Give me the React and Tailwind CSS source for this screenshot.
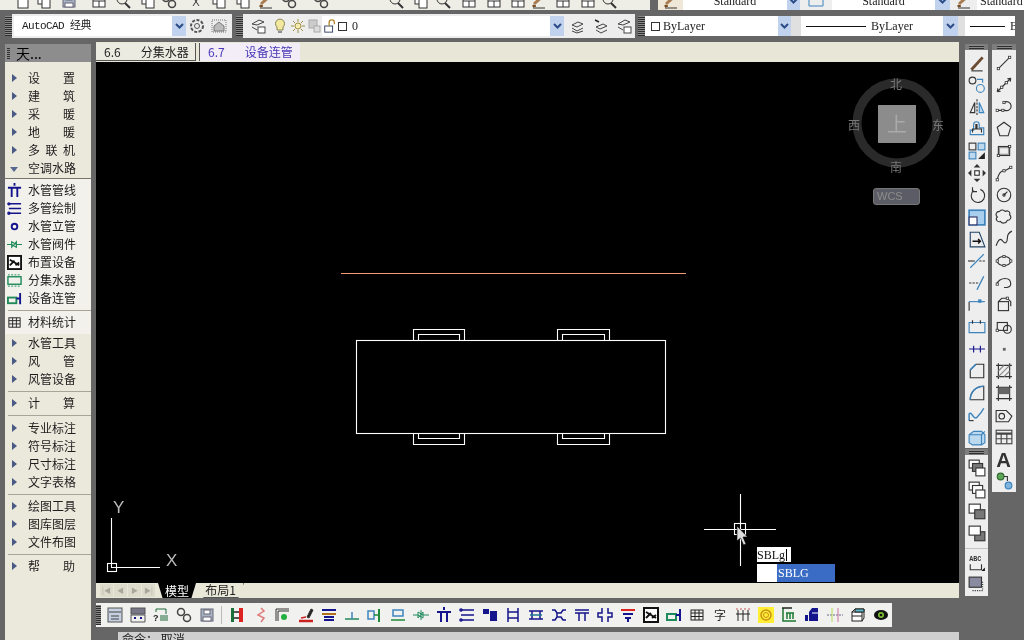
const S = ({ children, w = 16, h = 16 }) => (
  <svg width={w} height={h} viewBox="0 0 16 16" fill="none" stroke="#333" strokeWidth="1" className="shrink-0">
    {children}
  </svg>
);

// square nodes used by the draw toolbar
const N = ({ x, y }) => <rect x={x - 1} y={y - 1} width="2" height="2" fill="#fff" stroke="#333" strokeWidth=".7" />;

const navy = '#14148c';
const green = '#1f8a5a';
const blue = '#3d84bd';

const icons = {
  pipe: <g stroke={navy} strokeWidth="2"><path d="M1 5h14M8 0v3M5 5v10M11 5v10" /></g>,
  multi: <g stroke={navy} strokeWidth="1.6"><path d="M2 3h13M2 8h13M2 13h13" /><circle cx="2" cy="3" r="1" /><circle cx="2" cy="13" r="1" /></g>,
  riser: <circle cx="8" cy="8" r="3" stroke={navy} strokeWidth="2" />,
  valve: <g stroke={green} strokeWidth="1.2"><path d="M0 8h5l5 3V5l-5 6V5l5 3h6" /></g>,
  equip: <g><rect x="1" y="1" width="14" height="14" fill="#fff" stroke="#111" strokeWidth="2" /><path d="M3 5l10 6M3 11l5-5M9 11l4-3" stroke="#111" strokeWidth="2" /></g>,
  manifold: <g stroke={green}><rect x="1" y="4" width="14" height="8" strokeWidth="1.5" /><path d="M1 2h14M1 14h14" strokeDasharray="2 1.5" /></g>,
  connect: <g><rect x="1" y="7" width="9" height="6" stroke={green} strokeWidth="2" /><path d="M10 8h3M14 2v12" stroke={navy} strokeWidth="2" /></g>,
  table: <g stroke="#222"><rect x="2" y="3" width="12" height="10" /><path d="M2 6h12M2 9.500h12M6 3v10M10 3v10" /></g>,

  brush: <g><path d="M3 11L13 2" stroke="#a87b50" strokeWidth="3" /><path d="M2 12l3 1-3 1z" fill="#7a4a20" stroke="#7a4a20" /><path d="M2 15h12" /></g>,
  line: <g><path d="M3 13L13 3" /><N x={3} y={13} /><N x={13} y={3} /></g>,
  xline: <g><path d="M2 14L14 2M2 14l3-.5M2 14l.5-3M14 2l-3 .5M14 2l-.5 3" /><N x={6} y={10} /><N x={10} y={6} /></g>,
  pline: <g><path d="M2 11h7a4 4 0 1 0-1-7" /><N x={2} y={11} /><N x={7} y={11} /><N x={8} y={4} /></g>,
  polygon: <path d="M8 2l6 4.500-2.300 7.500H4.300L2 6.500z" />,
  rect: <g><rect x="3" y="4" width="10" height="8" /><path d="M4 5h8v6H4z" stroke="#999" /><N x={3} y={12} /><N x={13} y={4} /></g>,
  arc: <g><path d="M2 14c1-5 3-8 6-8 2 0 4-2 6-3" /><N x={2} y={14} /><N x={8} y={6} /><N x={14} y={3} /></g>,
  circle: <g><circle cx="8" cy="8" r="6" /><path d="M8 8l3-3" /><circle cx="8" cy="8" r="1" /></g>,
  cloud: <path d="M4 3c2-2 4-1 5 0 2-1 5 0 4 3 2 2 1 5-2 5-1 3-5 3-6 1-3 1-5-2-3-4-2-2-1-5 2-5z" />,
  spline: <path d="M1 14c2-6 4-7 6-4s4 1 4-3 2-5 4-6" />,
  ellipse: <g><ellipse cx="8" cy="8" rx="6" ry="4" /><N x={2} y={8} /><N x={14} y={8} /><N x={8} y={4} /><N x={8} y={12} /></g>,
  earc: <g><path d="M2 9c0-3 4-5 7-5s5 2 5 5-4 3-6 3" /><N x={2} y={9} /></g>,
  insert: <g><rect x="3" y="5" width="9" height="8" /><path d="M3 5l3-3h5l3 3v4" /><N x={11} y={2} /></g>,
  block: <g><rect x="2" y="4" width="9" height="7" /><circle cx="11" cy="10" r="3.500" /><N x={2} y={11} /></g>,
  point: <rect x="7" y="7" width="2.500" height="2.500" fill="#666" stroke="none" />,
  hatch: <g><path d="M1 3h14M1 13h14M3 1v14M13 1v14" /><path d="M3 8l5-5M3 13L13 3M8 13l5-5" stroke="#888" /></g>,
  grad: <g><path d="M1 3h14M1 13h14M3 1v14M13 1v14" /><rect x="3" y="3" width="10" height="6" fill="#666" stroke="none" /></g>,
  region: <g><path d="M1 4h9l5 5-3 5H1z" /><circle cx="6" cy="9" r="2.500" /></g>,
  grid: <g stroke="#444"><rect x="1" y="2" width="14" height="12" /><path d="M1 5h14" strokeWidth="2" /><path d="M1 9.500h14M5.500 5v9M10.500 5v9" /></g>,
  bigA: <text x="1" y="15" fontSize="18" fontWeight="700" fontFamily="Liberation Sans, sans-serif" fill="#333" stroke="none">A</text>,
  addsel: <g><circle cx="5" cy="4" r="3" fill="#5da558" stroke="#2f6a2f" /><circle cx="12" cy="12" r="3" fill="#7fb4dd" stroke={blue} /><path d="M8 4h3v4" /></g>,

  erase: <g><path d="M3 14L13 3" stroke="#6b4a30" strokeWidth="2.500" /><path d="M3 15h10" /></g>,
  copy: <g><circle cx="4" cy="4" r="3" /><circle cx="11" cy="11" r="3.500" stroke={blue} /><path d="M8 3h5v3" stroke={blue} /></g>,
  mirror: <g><path d="M8 1v14" strokeDasharray="2 1" /><path d="M6 4L2 13h4z" /><path d="M10 4l4 9h-4z" fill="#bcd9ef" stroke={blue} /></g>,
  offset: <g stroke={blue}><path d="M2 13V9h3V4a2 2 0 0 1 5 0v3h4v6z" /><path d="M4 11V8h3V4h1v4h4v3" stroke="#333" /></g>,
  array: <g><rect x="1" y="1" width="6" height="6" /><rect x="9" y="1" width="6" height="6" fill="#bcd9ef" stroke={blue} /><rect x="1" y="9" width="6" height="6" fill="#bcd9ef" stroke={blue} /><path d="M9 15l6-6v6z" fill="#222" stroke="none" /></g>,
  move: <g fill="#333" stroke="none"><path d="M8 0l3 3H5zM8 16l-3-3h6zM0 8l3-3v6zM16 8l-3 3V5z" /><rect x="6" y="6" width="4" height="4" fill="#fff" stroke="#333" /></g>,
  rotate: <path d="M5 4a6 6 0 1 0 6-1M4 1v4h4" />,
  scale: <g><rect x="1" y="2" width="14" height="13" fill="#a8d0ee" stroke={blue} strokeWidth="1.500" /><rect x="1" y="8" width="7" height="7" fill="#fff" stroke="#336" /></g>,
  stretch: <g><path d="M2 2h8l5 13H2z" stroke="#246" /><path d="M4 10h7M9 8l2 2-2 2" stroke="#111" strokeWidth="1.300" /></g>,
  trim: <g><path d="M2 14L14 2" stroke={blue} /><path d="M0 8h6" /><path d="M10 8h6" strokeDasharray="2 1" /></g>,
  extend: <g><path d="M8 14L14 2" stroke={blue} strokeWidth="1.300" /><path d="M1 8h9" strokeDasharray="2 1" /></g>,
  brk: <g><path d="M1 5V13" /><path d="M1 5h14" stroke={blue} /><rect x="9" y="3" width="3" height="3" fill={blue} stroke="none" /></g>,
  brk2: <g stroke={blue}><path d="M1 4h14v9H1z" /><path d="M4 2v3M11 2v3" stroke="#333" /></g>,
  join: <g stroke={navy}><path d="M1 8h14M5 5v6M11 5v6" /></g>,
  chamfer: <g><path d="M2 14V7l5-5h7v12z" /><path d="M2 7l5-5" stroke={blue} strokeWidth="1.300" /></g>,
  fillet: <g><path d="M2 14c0-7 5-12 12-12v12z" /><path d="M2 14c0-7 5-12 12-12" stroke={blue} strokeWidth="1.300" /></g>,
  blend: <g><path d="M1 13V7c2-3 4 6 7 3s4-4 6-8" stroke={blue} strokeWidth="1.300" /><path d="M1 13h4" /></g>,
  solid: <g stroke={blue}><path d="M1 6l4-3h7l3 3v7l-3 2H4l-3-2z" fill="#bcd9ef" /><path d="M1 6h11v9M12 6l3-3" /></g>,
  order1: <g><rect x="1" y="1" width="9" height="7" fill="#fff" /><rect x="4" y="4" width="9" height="7" fill="#777" /><rect x="7" y="8" width="8" height="7" fill="#fff" /></g>,
  order2: <g><rect x="1" y="1" width="9" height="7" fill="#fff" /><rect x="4" y="4" width="9" height="7" fill="#fff" /><rect x="7" y="8" width="8" height="7" fill="#fff" /></g>,
  order3: <g><rect x="1" y="1" width="10" height="8" fill="#fff" /><rect x="6" y="6" width="9" height="8" fill="#777" /></g>,
  order4: <g><rect x="6" y="6" width="9" height="8" fill="#777" /><rect x="1" y="1" width="10" height="8" fill="#fff" /></g>,
  abc: <g><text x="1" y="6" fontSize="6" fontWeight="700" fontFamily="Liberation Mono, monospace" fill="#333" stroke="none">ABC</text><path d="M2 9v5h10v-5" /><path d="M12 15l3-3v3z" fill="#111" stroke="none" /></g>,
  grey: <g><rect x="1" y="1" width="11" height="9" fill="#8a8aa0" /><path d="M4 13h9M13 5v8" strokeDasharray="1 1" /></g>,

  newf: <rect x="3" y="2" width="10" height="13" fill="#fff" />,
  save: <g stroke="#667"><rect x="2" y="2" width="12" height="12" fill="#a9b4c4" /><rect x="5" y="3" width="6" height="4" fill="#fff" /><rect x="4" y="10" width="8" height="4" fill="#fff" /></g>,
  cut: <path d="M3 1l8 12M13 1L5 13" />,
  two: <g><rect x="2" y="1" width="8" height="10" fill="#fff" /><rect x="6" y="5" width="8" height="10" fill="#fff" /></g>,
  zoom: <g><circle cx="7" cy="6" r="5" /><path d="M10 10l5 5" strokeWidth="2" /></g>,
  panel: <g><rect x="2" y="1" width="12" height="13" fill="#fff" /><path d="M2 8h12M8 8v6" /></g>,

  bulb: <g><path d="M5 9a4.500 4.500 0 1 1 6 0v3H5z" fill="#f2e8a0" stroke="#8a8550" /><path d="M6 14h4" /></g>,
  sun: <g stroke="#a09040"><circle cx="8" cy="8" r="3" fill="#f5ebb0" /><path d="M8 1v3M8 12v3M1 8h3M12 8h3M3 3l2 2M11 11l2 2M13 3l-2 2M5 11l-2 2" /></g>,
  greybox: <g stroke="#aaa"><rect x="3" y="2" width="8" height="8" fill="#ccc" /><rect x="8" y="8" width="6" height="6" fill="#ddd" /></g>,
  lock: <g><rect x="2" y="8" width="9" height="7" fill="#fff" stroke="#235" /><path d="M7 8V4a3 3 0 0 1 6 0v2" stroke="#b08a30" strokeWidth="1.500" /></g>,
  gear: <g stroke="#555"><circle cx="8" cy="8" r="6" strokeDasharray="3 1.500" strokeWidth="2" /><circle cx="8" cy="8" r="2.500" /></g>,
  home: <g stroke="#777"><rect x="1" y="2" width="14" height="12" strokeDasharray="1 1" /><path d="M3 8l5-4 5 4v5H3z" fill="#bbb" /></g>,
  layers: <g stroke="#444"><path d="M3 7l6-3 5 2-6 3zM3 10l5 3 6-3M3 13l5 2 6-2" /></g>,
  layers2: <g stroke="#444"><path d="M3 9l7-3 4 2-7 3zM3 12l5 3 6-3" /><path d="M2 2l4 2" stroke="#222" strokeWidth="1.500" /></g>,
  layers3: <g stroke="#444"><path d="M2 6l7-4 5 2-7 3zM2 9l5 3" /><rect x="8" y="9" width="7" height="6" fill="#fff" /></g>,

  qhelp: <g><text x="0" y="14" fontSize="9" fontWeight="700" fontFamily="Liberation Sans, sans-serif" fill="#222" stroke="none">?</text><path d="M3 5V2h10v5M7 9h8M7 11h8M7 13h8" stroke="#1c6a3a" /></g>,
  chain: <g stroke="#444" strokeWidth="1.500"><circle cx="5" cy="5" r="3.500" /><circle cx="11" cy="11" r="3.500" /></g>,
  dwg: <g><rect x="1" y="1" width="14" height="14" fill="#c5d0e0" stroke="#555" /><path d="M2 5h12M4 9h8M4 12h8" stroke="#444" /></g>,
  calc: <g><rect x="1" y="1" width="14" height="6" fill="#778" stroke="#555" /><path d="M1 8h14v7H1z" stroke="#555" /><path d="M4 11h2M10 11h2" stroke={navy} strokeWidth="2" /></g>,
  redbar: <g><rect x="2" y="1" width="3" height="14" fill="#1b6f3a" stroke="none" /><rect x="10" y="1" width="4" height="14" fill="#d22" stroke="none" /><path d="M5 5h5M5 11h5" stroke="#222" strokeWidth="1.500" /></g>,
  redcurve: <path d="M9 1l3 3-6 4 6 3-3 4" stroke="#e07878" strokeWidth="1.500" />,
  corner: <g><path d="M1 14V2h13M3 14V4h11" stroke="#333" /><circle cx="9" cy="10" r="3" fill="#22b040" stroke="none" /></g>,
  pen: <g><path d="M9 10l4-8 2 1-4 8z" fill="#222" /><path d="M1 14h14" stroke="#c22" strokeWidth="2.500" /><path d="M3 11l5-1" stroke="#c22" strokeWidth="1.500" /></g>,
  stack: <g stroke={navy}><path d="M1 3h14" strokeWidth="2" /><path d="M1 7h14" stroke="#b07020" strokeWidth="2" /><path d="M3 10h10M3 13h10" strokeWidth="2" /></g>,
  tee: <g stroke={green} strokeWidth="1.500"><path d="M1 12h14" /><path d="M8 5v7" stroke={blue} /></g>,
  sideT: <g strokeWidth="1.500"><rect x="1" y="4" width="6" height="8" stroke={blue} /><path d="M7 8h5" stroke="#1f8a3a" /><path d="M12 2v13" stroke="#1f8a3a" strokeWidth="2" /></g>,
  box2: <g strokeWidth="1.500"><rect x="3" y="3" width="10" height="6" stroke={blue} /><path d="M1 13h14" stroke="#1f8a3a" /></g>,
  gval: <g stroke="#1f8a5a"><path d="M0 8h5l5 3V5l-5 6V5l5 3h6M8 3v10" /></g>,
  pair: <g fill={navy} stroke="none"><rect x="1" y="2" width="6" height="5" /><rect x="8" y="4" width="7" height="10" /></g>,
  ibeam: <g stroke={navy} strokeWidth="1.500"><path d="M3 1v14M13 1v14M3 5h10M3 11h10" /></g>,
  bar: <g stroke={navy} strokeWidth="1.500"><path d="M1 4h14M1 12h14M4 4v8M12 4v8" /><path d="M2 8h12" stroke="#1a7a90" /></g>,
  flare: <g stroke={navy} strokeWidth="1.500"><path d="M1 3h3l2 3h4l2-3h3M1 13h3l2-3h4l2 3h3M6 6v4" /></g>,
  fork: <g stroke={navy} strokeWidth="1.500"><path d="M1 3h14M1 6h14M5 6v8M11 6v8" /></g>,
  cross: <g stroke={navy} strokeWidth="1.500"><path d="M5 1v5H1v4h4v5M11 1v5h4v4h-4v5" /></g>,
  funnel: <g strokeWidth="2"><path d="M1 3h14" stroke="#d22" /><path d="M3 7h10" stroke={navy} /><path d="M5 11h6M8 11v4" stroke={navy} /></g>,
  zi: <text x="2" y="13" fontSize="12" fontFamily="Noto Sans CJK SC, sans-serif" fill="#222" stroke="none">字</text>,
  comb: <g><path d="M1 7h14M3 3v11M8 3v11M13 3v11" stroke="#222" /><path d="M1 2h14" stroke="#c55" strokeDasharray="2 2" /></g>,
  yellow: <g><rect x="0" y="0" width="16" height="16" fill="#ffee33" stroke="none" /><circle cx="8" cy="8" r="5" stroke="#c8901a" strokeWidth="1.500" /><circle cx="8" cy="8" r="2.500" stroke="#c8901a" /></g>,
  gbar: <g stroke="#1a7a30" strokeWidth="1.500"><path d="M2 1v13h13" /><path d="M5 6h8M6 6v6M9 6v6M12 6v6" /><path d="M1 1h10" stroke="#222" /></g>,
  house: <g fill={navy} stroke="none"><path d="M5 5l3-4h6v13H5z" /><rect x="1" y="8" width="3" height="6" /><path d="M8 6h6" stroke="#fff" /></g>,
  magbar: <g><path d="M0 8h16" stroke="#668" strokeDasharray="2 1" /><path d="M5 1v14" stroke="#b4dc50" /><path d="M11 1v14" stroke="#d070a0" /></g>,
  cube: <g stroke="#222"><rect x="2" y="5" width="10" height="9" fill="#fff" /><path d="M2 5l3-3h9v9l-2 3M2 9h10" /><path d="M5 2h9v3H5z" fill="#58b8c8" /></g>,
  eye: <g><ellipse cx="8" cy="8" rx="7" ry="5" fill="#111" stroke="none" /><circle cx="8" cy="8" r="3" fill="#7fbf30" stroke="none" /><circle cx="8" cy="8" r="1.300" fill="#111" stroke="none" /></g>,
};

const Icon = ({ n, w, h }) => <S w={w} h={h}>{icons[n]}</S>;

const Gripper = ({ className = '' }) => (
  <div className={`bg-[repeating-linear-gradient(0deg,#2e2e2e_0_1px,#8a8a8a_1px_2px)] ${className}`} />
);

const Chevron = ({ className = '' }) => (
  <div className={`flex items-center justify-center bg-[#c1d2ee] ${className}`}>
    <svg width="9" height="6" viewBox="0 0 9 6" fill="none" stroke="#2b4c86" strokeWidth="2">
      <path d="M1 1l3.500 3.500L8 1" />
    </svg>
  </div>
);

// side menu ------------------------------------------------------------
const Label = ({ text }) => (
  <div className="ml-[5px] flex w-[47px] justify-between text-[12px] leading-none text-[#1e1e1e]">
    {text.split('').map((c, i) => <span key={i}>{c}</span>)}
  </div>
);

const MenuRow = ({ text, open }) => (
  <div className="flex h-[18px] items-center">
    <div className="flex w-[18px] justify-center">
      {open ? (
        <div className="mt-[2px] h-0 w-0 border-x-[4px] border-t-[5px] border-x-transparent border-t-[#56688e]" />
      ) : (
        <div className="h-0 w-0 border-y-[4px] border-l-[5px] border-y-transparent border-l-[#4a5a84]" />
      )}
    </div>
    <Label text={text} />
  </div>
);

const ToolRow = ({ text, icon }) => (
  <div className="flex h-[18px] items-center">
    <div className="flex w-[18px] justify-center pl-[1px]"><Icon n={icon} w={15} h={15} /></div>
    <Label text={text} />
  </div>
);

const Sep = ({ h = 'h-[6px]' }) => (
  <div className={`${h} flex items-center pl-[3px]`}>
    <div className="h-[1px] w-full bg-[#a7a597]" />
  </div>
);

const SidePanel = () => (
  <div className="ml-[5px] mr-[5px] mt-[2px] flex w-[86px] shrink-0 flex-col">
    <div className="flex h-[18px] shrink-0 items-center bg-[#8d8d8d]">
      <Gripper className="ml-[2px] h-[12px] w-[3px]" />
      <span className="ml-[6px] text-[14px] leading-none text-black">天...</span>
    </div>
    <div className="flex-1 bg-[#ebe8dc] pt-[7px]">
      {['设置', '建筑', '采暖', '地暖', '多联机'].map((t) => <MenuRow key={t} text={t} />)}
      <MenuRow text="空调水路" open />
      <div className="mt-[1px] bg-[#f2f1ec]">
        <div className="h-[1px] bg-[#77756b]" />
        <div className="pt-[2px]">
          <ToolRow text="水管管线" icon="pipe" />
          <ToolRow text="多管绘制" icon="multi" />
          <ToolRow text="水管立管" icon="riser" />
          <ToolRow text="水管阀件" icon="valve" />
          <ToolRow text="布置设备" icon="equip" />
          <ToolRow text="分集水器" icon="manifold" />
          <ToolRow text="设备连管" icon="connect" />
        </div>
        <Sep />
        <ToolRow text="材料统计" icon="table" />
        <div className="h-[3px]" />
      </div>
      {['水管工具', '风管', '风管设备'].map((t) => <MenuRow key={t} text={t} />)}
      <Sep />
      <MenuRow text="计算" />
      <Sep h="h-[7px]" />
      {['专业标注', '符号标注', '尺寸标注', '文字表格'].map((t) => <MenuRow key={t} text={t} />)}
      <Sep />
      {['绘图工具', '图库图层', '文件布图'].map((t) => <MenuRow key={t} text={t} />)}
      <Sep />
      <MenuRow text="帮助" />
    </div>
  </div>
);

// top toolbars -----------------------------------------------------------
const TopRow1 = () => (
  <div className="h-[10px] shrink-0 overflow-hidden">
    <div className="-mt-[8px] flex h-[18px] items-center">
      <div className="flex h-full w-[650px] items-center bg-[#eeede6] pl-[15px]">
        {[
          ['newf', 21], ['two', 25], ['save', 30], ['panel', 24], ['zoom', 25], ['two', 21], ['chain', 27], ['cut', 23],
          ['two', 24], ['two', 23], ['brush', 23], ['chain', 32], ['chain', 75], ['zoom', 25], ['two', 22], ['zoom', 26],
          ['panel', 25], ['panel', 24], ['panel', 21], ['brush', 24], ['panel', 25], ['panel', 21], ['zoom', 10],
        ].map(([n, w], i) => (
          <div key={i} className="shrink-0" style={{ width: w }}><Icon n={n} /></div>
        ))}
      </div>
      <div className="w-[8px]" />
      <div className="flex h-full w-[25px] items-center justify-center bg-[#efe8d8]"><Icon n="brush" /></div>
      <div className="flex h-full w-[104px] items-center justify-center bg-white font-['Liberation_Serif',serif] text-[12px] text-[#222]">Standard</div>
      <Chevron className="h-full w-[13px]" />
      <div className="flex h-full w-[32px] items-center justify-center bg-[#eeeeee]"><Icon n="brk2" /></div>
      <div className="flex h-full w-[103px] items-center justify-center bg-white font-['Liberation_Serif',serif] text-[12px] text-[#222]">Standard</div>
      <Chevron className="h-full w-[15px]" />
      <div className="flex h-full w-[27px] items-center justify-center bg-[#eeeeee]"><Icon n="brush" /></div>
      <div className="h-full flex-1 bg-white pl-[3px] font-['Liberation_Serif',serif] text-[12px] text-[#222]">Standard</div>
    </div>
  </div>
);

const Btn = ({ n, w = 'w-[22px]' }) => (
  <div className={`flex shrink-0 justify-center ${w}`}><Icon n={n} w={16} h={16} /></div>
);

const TopRow2 = () => (
  <div className="mt-[4px] flex h-[24px] shrink-0 items-center">
    <Gripper className="ml-[5px] h-[20px] w-[7px]" />
    <div className="flex h-full w-[220px] items-center bg-[#ededed] pl-[2px]">
      <div className="flex h-[20px] w-[158px] items-center bg-white pl-[8px] font-['Liberation_Mono','Noto_Sans_CJK_SC',monospace] text-[11px] tracking-[-0.6px] text-[#222]">AutoCAD 经典</div>
      <Chevron className="h-[20px] w-[14px]" />
      <Btn n="gear" />
      <Btn n="home" />
    </div>
    <Gripper className="ml-[4px] h-[20px] w-[7px]" />
    <div className="flex h-full w-[392px] items-center bg-[#ededed] pl-[3px]">
      <Btn n="layers3" w="w-[24px]" />
      <Btn n="bulb" w="w-[20px]" />
      <Btn n="sun" w="w-[15px]" />
      <Btn n="greybox" w="w-[17px]" />
      <div className="flex h-[20px] w-[231px] items-center bg-white pl-[1px] text-[12px] text-[#222]">
        <Icon n="lock" w={14} h={14} />
        <span className="ml-[1px] h-[9px] w-[9px] border border-[#333]" />
        <span className="ml-[5px] font-['Liberation_Serif',serif]">0</span>
      </div>
      <Chevron className="h-[20px] w-[14px]" />
      <Btn n="layers" w="w-[25px]" />
      <Btn n="layers2" w="w-[23px]" />
      <Btn n="layers3" w="w-[23px]" />
    </div>
    <Gripper className="ml-[3px] h-[20px] w-[7px]" />
    <div className="flex h-[20px] w-[133px] items-center bg-white pl-[6px] font-['Liberation_Serif',serif] text-[12px] text-[#222]">
      <span className="mr-[3px] h-[9px] w-[9px] border border-[#333]" />ByLayer
    </div>
    <Chevron className="h-[20px] w-[13px]" />
    <div className="h-[20px] w-[10px] bg-[#e0e0e0]" />
    <div className="flex h-[20px] w-[142px] items-center bg-white pl-[5px] font-['Liberation_Serif',serif] text-[12px] text-[#222]">
      <span className="mr-[5px] h-[1px] w-[60px] bg-[#111]" />ByLayer
    </div>
    <Chevron className="h-[20px] w-[15px]" />
    <div className="h-[20px] w-[7px] bg-[#e0e0e0]" />
    <div className="flex h-[20px] w-[50px] items-center overflow-hidden bg-white pl-[5px] font-['Liberation_Serif',serif] text-[12px] text-[#222]">
      <span className="mr-[5px] h-[1px] w-[35px] shrink-0 bg-[#111]" />B
    </div>
  </div>
);

// canvas ---------------------------------------------------------------
const Drawing = () => (
  <svg viewBox="96 62 863 521" className="absolute inset-0 h-full w-full" fill="none" stroke="#fff" strokeWidth="1.100">
    <path d="M341 273.500h345" stroke="#f59a70" />
    <rect x="356.500" y="340.500" width="309" height="93" />
    <path d="M413.500 340v-10.500h51V340M418.500 340v-5.500h41V340M557.500 340v-10.500h52V340M562.500 340v-5.500h42V340" />
    <path d="M413.500 434v10.500h51V434M418.500 434v4.500h41V434M557.500 434v10.500h52V434M562.500 434v4.500h42V434" />
    <path d="M111.500 518v49.500H160" />
    <rect x="107.500" y="563.500" width="9" height="8" />
    <text x="113" y="513" fontSize="17" fill="#bbb" stroke="none" fontFamily="Liberation Sans, sans-serif">Y</text>
    <text x="166" y="566" fontSize="17" fill="#bbb" stroke="none" fontFamily="Liberation Sans, sans-serif">X</text>
    <circle cx="897" cy="123" r="40" stroke="#2a2a2a" strokeWidth="9" />
    <path d="M704 529.500h72M740.500 494v72" />
    <rect x="734.500" y="523.500" width="11" height="11" />
    <path d="M737 526v15l3.500-3 3 7 2.500-1-3-7h4.500z" fill="#ddd" stroke="#000" strokeWidth=".6" />
  </svg>
);

const Canvas = () => (
  <div className="relative h-[521px] shrink-0 bg-black">
    <Drawing />
    <div className="absolute left-[782px] top-[43px] flex h-[38px] w-[38px] items-center justify-center bg-[#8c8c8c] text-[20px] text-[#aaa]">上</div>
    <span className="absolute left-[794px] top-[13px] text-[12px] text-[#777]">北</span>
    <span className="absolute left-[794px] top-[96px] text-[12px] text-[#777]">南</span>
    <span className="absolute left-[752px] top-[54px] text-[12px] text-[#777]">西</span>
    <span className="absolute left-[836px] top-[54px] text-[12px] text-[#777]">东</span>
    <div className="absolute left-[777px] top-[126px] flex h-[17px] w-[47px] items-center rounded-[3px] border border-[#777] bg-[#5c5c66] pl-[3px] font-['Liberation_Sans',sans-serif] text-[11px] text-[#8c8c8c]">WCS</div>
    <div className="absolute left-[661px] top-[485px] flex h-[15px] w-[34px] items-center bg-white font-['Liberation_Serif',serif] text-[12px] text-[#111]">
      SBLg<span className="ml-[1px] h-[12px] w-[1px] bg-black" />
    </div>
    <div className="absolute left-[661px] top-[502px] flex h-[18px] w-[78px] bg-white font-['Liberation_Serif',serif] text-[12px] text-white">
      <div className="w-[20px]" />
      <div className="flex flex-1 items-center bg-[#3a6cc6] pl-[1px]">SBLG</div>
    </div>
  </div>
);

const LayoutTabs = () => (
  <div className="flex h-[15px] shrink-0 items-center bg-[#e9e7d8]">
    <div className="flex w-[62px] shrink-0 items-center gap-[1px] pl-[4px] text-[#a9a79a]">
      {['|◀', '◀', '▶', '▶|'].map((a) => (
        <span key={a} className="flex h-[13px] w-[13px] items-center justify-center bg-[#dddbcc] text-[7px] leading-none">{a}</span>
      ))}
    </div>
    <div className="flex h-full w-[38px] items-center justify-center bg-black text-[12px] leading-none text-white [clip-path:polygon(0_0,100%_0,88%_100%,12%_100%)]">模型</div>
    <div className="ml-[2px] flex h-full w-[46px] items-center justify-center border-r border-b border-[#555] text-[12px] leading-none text-[#222] [clip-path:polygon(0_0,100%_0,88%_100%,12%_100%)]">布局1</div>
  </div>
);

const bottomIcons = [
  'dwg', 'calc', 'qhelp', 'chain', 'save', null, 'redbar', 'redcurve', 'corner', 'pen', 'stack', 'tee', 'sideT', 'box2', 'gval',
  'pipe', 'multi', 'pair', 'ibeam', 'bar', 'flare', 'fork', 'cross', 'funnel', 'equip', 'connect', 'table', 'zi', 'comb',
  'yellow', 'gbar', 'house', 'magbar', 'cube', 'eye',
];

const BottomBar = () => (
  <div className="mt-[5px] flex h-[24px] w-[796px] shrink-0 items-center bg-[#f1f1ef]">
    <Gripper className="h-[20px] w-[7px]" />
    <div className="ml-[2px] flex items-center">
      {bottomIcons.map((n, i) =>
        n ? (
          <div key={i} className="flex w-[23px] justify-center"><Icon n={n} /></div>
        ) : (
          <div key={i} className="mx-[3px] h-[18px] w-[1px] bg-[#bbb]" />
        )
      )}
    </div>
  </div>
);

const CommandLine = () => (
  <div className="ml-[22px] mt-[5px] flex-1 overflow-hidden bg-[#cfcfcf] pl-[4px]">
    <div className="text-[12px] leading-[14px] text-[#222]">命令： 取消</div>
  </div>
);

const ToolColumn = ({ items }) => (
  <div>
    <div className="flex h-[6px] items-center justify-center bg-[#7d7d7d]">
      <Gripper className="h-[4px] w-[15px]" />
    </div>
    <div className="flex flex-col bg-[#eeeeee] pt-[2px]">
      {items.map((n, i) =>
        n === '-' ? (
          <div key={i} className="my-[3px] h-[1px] bg-[#c4c4c4]" />
        ) : (
          <div key={i} className="flex h-[22px] items-center justify-center"><Icon n={n} w={18} h={18} /></div>
        )
      )}
    </div>
  </div>
);

export default function App() {
  return (
    <div className="flex h-[640px] w-[1024px] flex-col overflow-hidden bg-[#666] font-['Noto_Sans_CJK_SC',sans-serif] blur-[0.4px]">
      <TopRow1 />
      <TopRow2 />
      <div className="mt-[4px] flex min-h-0 flex-1">
        <SidePanel />
        <div className="flex w-[863px] shrink-0 flex-col">
          <div className="flex h-[20px] shrink-0 items-end bg-[#e8e6d6] pb-[1px]">
            <div className="flex h-[18px] w-[100px] items-center gap-[20px] border-b border-r border-[#555] bg-[#ecebe1] pl-[8px] text-[12px] leading-none text-[#222]">
              <span>6.6</span><span>分集水器</span>
            </div>
            <div className="ml-[3px] flex h-[18px] w-[101px] items-center gap-[20px] border-l border-[#555] bg-[#f2edf6] pl-[8px] text-[12px] leading-none text-[#4a38b8]">
              <span>6.7</span><span>设备连管</span>
            </div>
          </div>
          <Canvas />
          <LayoutTabs />
          <BottomBar />
          <CommandLine />
        </div>
        <div className="ml-[6px] flex items-start gap-[4px]">
          <div className="flex w-[23px] flex-col gap-[1px] pt-[2px]">
            <ToolColumn items={['erase', 'copy', 'mirror', 'offset', 'array', 'move', 'rotate', 'scale', 'stretch', 'trim', 'extend', 'brk', 'brk2', 'join', 'chamfer', 'fillet', 'blend', 'solid']} />
            <ToolColumn items={['order1', 'order2', 'order3', 'order4', '-', 'abc', 'grey']} />
          </div>
          <div className="w-[24px] pt-[2px]">
            <ToolColumn items={['line', 'xline', 'pline', 'polygon', 'rect', 'arc', 'circle', 'cloud', 'spline', 'ellipse', 'earc', 'insert', 'block', 'point', 'hatch', 'grad', 'region', 'grid', 'bigA', 'addsel']} />
          </div>
        </div>
      </div>
    </div>
  );
}
